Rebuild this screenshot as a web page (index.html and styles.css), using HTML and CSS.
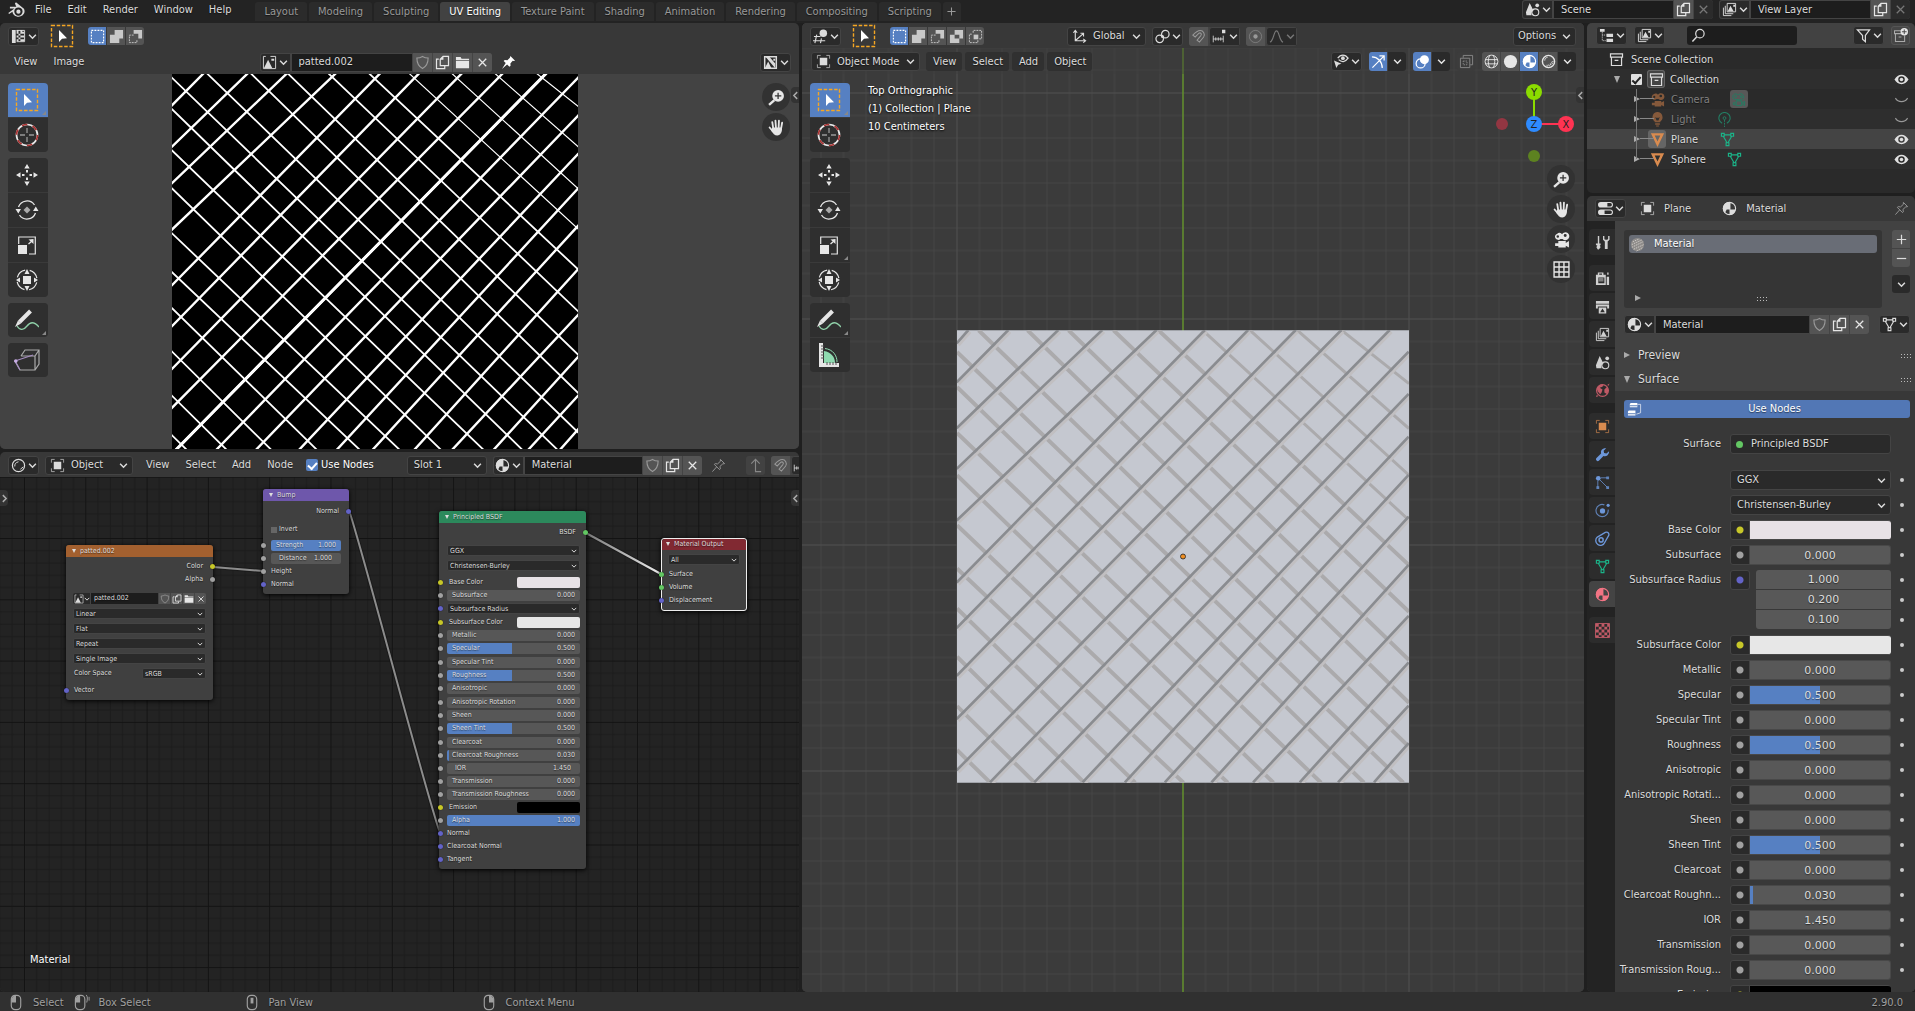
FILE: index.html
```html
<!DOCTYPE html>
<html lang="en">
<head>
<meta charset="utf-8">
<title>Blender</title>
<link rel="stylesheet" href="styles.css">
</head>
<body>
<svg class="defs" aria-hidden="true">
  <symbol id="i-blender" viewBox="0 0 16 16"><path fill="currentColor" fill-rule="evenodd" d="M7.500 1.200 15 7.400c2 4-1.500 7.500-5 7.500-3.200 0-5.600-2-5.800-4.700L1 12.300.3 11.200 6 7H1.800V5.500h6L6.500 2.300zM9.800 6a3.900 3.900 0 1 0 0 7.800 3.900 3.900 0 0 0 0-7.800zm0 2a2 2 0 1 1 0 4 2 2 0 0 1 0-4z"/></symbol>
  <symbol id="i-chev" viewBox="0 0 8 8"><path fill="none" stroke="currentColor" stroke-width="1.300" d="M1 2.500 4 5.500 7 2.500"/></symbol>
  <symbol id="i-uv" viewBox="0 0 16 16"><path fill="currentColor" d="M1 1h4v14H1zM6 1h2v2h2V1h2v2h2v2h-2v2h2v2h-2v2h2v2h-4v-2H8v2H6v-2h2V9H6V7h2V5H6zM8 3v2h2V3zM10 5v2h2V5zM8 7v2h2V7zM10 9v2h2V9z" fill-rule="evenodd"/><path fill="none" stroke="currentColor" d="M6 1.500h8.500v12H6"/></symbol>
  <symbol id="i-select" viewBox="0 0 24 24"><rect x="1.500" y="1.500" width="21" height="21" fill="none" stroke="#f5a623" stroke-width="1.400" stroke-dasharray="3.500 1.700"/><path fill="#fff" d="M9 6v12l3-3.200 5-.6z"/></symbol>
  <symbol id="i-set" viewBox="0 0 16 16"><rect x="1.500" y="1.500" width="13" height="13" fill="none" stroke="currentColor" stroke-width="1.200" stroke-dasharray="2 1.250"/></symbol>
  <symbol id="i-extend" viewBox="0 0 16 16"><path fill="currentColor" d="M6 1h9v9h-4v5H1V6h5z"/></symbol>
  <symbol id="i-subtract" viewBox="0 0 16 16"><path fill="currentColor" d="M6 1h9v9h-4V5H6z"/><path fill="none" stroke="currentColor" stroke-dasharray="2 1" d="M6 6.500H1.500v8h8V11"/></symbol>
  <symbol id="i-invert" viewBox="0 0 16 16"><path fill="currentColor" fill-rule="evenodd" d="M6 1h9v9h-4v5H1V6h5zM6 6v4h5V6z"/></symbol>
  <symbol id="i-intersect" viewBox="0 0 16 16"><rect x="6" y="6" width="5" height="5" fill="currentColor"/><path fill="none" stroke="currentColor" stroke-dasharray="2 1" d="M5.500 4V1.500h9v9H12M4 5.500H1.500v9h9V12"/></symbol>
  <symbol id="i-image" viewBox="0 0 16 16"><path fill="none" stroke="currentColor" d="M4 1.500H1.500v13h13v-13H9"/><path fill="currentColor" d="m2 14 4.500-9L11 14zM10 4h3v2h-3z"/></symbol>
  <symbol id="i-image2" viewBox="0 0 16 16"><path fill="none" stroke="currentColor" stroke-width="1.600" d="M1.800 1.800h12.400v12.400H1.800z"/><path fill="currentColor" d="m2 14 3.500-7L9 14zM2 1l11 13V9L7 2zM11 4h2v2h-2z"/></symbol>
  <symbol id="i-shield" viewBox="0 0 16 16"><path fill="none" stroke="currentColor" stroke-width="1.200" d="M8 1.500c2 1.200 4 1.700 6 1.700 0 5-1 8.500-6 11.300C3 11.700 2 8.200 2 3.200c2 0 4-.5 6-1.700z"/></symbol>
  <symbol id="i-copy" viewBox="0 0 16 16"><path fill="none" stroke="currentColor" stroke-width="1.300" d="M4 4.500H1.600v10h8.800V12M5.600 11.400V4.500l3-3h5.800v9.900z"/><path fill="currentColor" d="M5 5h4V1z"/></symbol>
  <symbol id="i-folder" viewBox="0 0 16 16"><path fill="currentColor" d="M1 2h5l1 2h8v1.500H1zM1 6.500h14V14H1z"/></symbol>
  <symbol id="i-x" viewBox="0 0 16 16"><path stroke="currentColor" stroke-width="1.400" d="m4 4 8 8m0-8-8 8"/></symbol>
  <symbol id="i-pin" viewBox="0 0 16 16"><path fill="currentColor" d="m10 1 5 5-1.500.500-1-.3L10 9l.2 2.500L9 12.600 6.500 10 1 15l4-6.500L2.800 6.500 4 5.400l2.800.2L9.500 3z"/></symbol>
  <symbol id="i-pin-off" viewBox="0 0 16 16"><path fill="none" stroke="currentColor" d="m10 1.500 4.500 4.500-2 .3L9.500 9l.5 2.500-1 .8-5.500-5.500 1-.8 2.500.3L10 3.500zM6 9.500 1.500 14.500"/></symbol>
  <symbol id="i-zoom" viewBox="0 0 16 16"><circle cx="9.500" cy="6.500" r="5.500" fill="currentColor"/><path stroke="currentColor" stroke-width="2.200" d="M6 10.500 1 15"/><path stroke="#333" stroke-width="1.200" d="M9.500 3.500v6m-3-3h6"/></symbol>
  <symbol id="i-hand" viewBox="0 0 16 16"><path fill="none" stroke="currentColor" stroke-width="1.700" stroke-linecap="round" d="M5 9 4 3M7.500 8.500 7 1.500M10 8.500l.3-7M12.300 9l1-5.500M4.500 11.500 1.500 8"/><path fill="currentColor" d="M4 8h9.200c.2 4-1.200 7.500-4.500 7.500-2.500 0-4-2-5.700-4.500z"/></symbol>
  <symbol id="i-cursor3d" viewBox="0 0 24 24"><circle cx="12" cy="12" r="10.500" fill="none" stroke="#e8e8e8" stroke-width="1.700"/><circle cx="12" cy="12" r="10.500" fill="none" stroke="#a33" stroke-width="1.700" stroke-dasharray="5.500 5.500"/><path stroke="#999" stroke-width="1.300" d="M12 5v5m0 4v5M5 12h5m4 0h5"/></symbol>
  <symbol id="i-move" viewBox="0 0 24 24"><path fill="currentColor" d="m12 1 2.700 4.500H9.300zM12 23l2.700-4.500H9.300zM1 12l4.500-2.700v5.400zM23 12l-4.500-2.700v5.400zM11 7h2v2.500h-2zM11 14.500h2V17h-2zM7 11h2.500v2H7zM14.500 11H17v2h-2.500z"/></symbol>
  <symbol id="i-rotate" viewBox="0 0 24 24"><path fill="none" stroke="currentColor" stroke-width="1.300" d="M3.500 9a9 9 0 0 1 16-2M20.500 15A9 9 0 0 1 4.500 17"/><path fill="currentColor" d="m.5 11h5.500l-2.700 4.500zM18 13h5.500l-2.700-4.500z"/><path fill="#aaa" d="m12 8.500 3.500 3.500-3.500 3.500L8.500 12z"/></symbol>
  <symbol id="i-scale" viewBox="0 0 24 24"><path fill="none" stroke="currentColor" stroke-width="1.200" d="M3.700 11V4h16.600v17H14"/><path fill="currentColor" d="M3 12h9v9H3zM18.500 6v5l-5-4.500z"/><path stroke="currentColor" stroke-width="1.300" d="m13.500 11 3.500-3"/></symbol>
  <symbol id="i-transform" viewBox="0 0 24 24"><circle cx="12" cy="12" r="10" fill="none" stroke="currentColor" stroke-width="1.200" stroke-dasharray="11 4.700" stroke-dashoffset="-2.500"/><path fill="currentColor" d="M8 8h8v8H8zM12 1l2.500 5h-5zM12 23l2.500-5h-5zM1 12l4-2.500v5zM23 12l-4-2.500v5z"/></symbol>
  <symbol id="i-annotate" viewBox="0 0 24 24"><path fill="none" stroke="#8fd0a8" stroke-width="1.300" d="M2 18c3 5 7 4 10 0s7-5 12 1"/><path stroke="currentColor" stroke-width="4" d="m15.500 3-11 11"/><path fill="currentColor" d="m0 19 3-6.500 3 3z"/></symbol>
  <symbol id="i-cube" viewBox="0 0 26 24"><path fill="none" stroke="#aaa" stroke-width="1.200" d="M7 8h14v14H6L1 13M7 8l4-6h14v14l-4 6M21 8l4-6"/><path fill="none" stroke="#a58cc0" stroke-width="1.200" d="m6 22-5-9 18-6"/><circle cx="1.800" cy="13" r="1.800" fill="#c9aee5"/></symbol>
  <symbol id="i-measure" viewBox="0 0 24 24"><path fill="#8fdab0" d="M7 8c7 1 11 6 11 12H7z"/><path fill="none" stroke="#8fdab0" d="M8 5.500c8 1 12 7 12 13.500"/><path fill="currentColor" d="M2 0h4v20h16v4H2z"/><path stroke="#555" d="M4 3h3M4 6h3M4 9h3M4 12h3M4 15h3M10 22v-3M13 22v-3M16 22v-3M19 22v-3"/></symbol>
  <symbol id="i-view3d" viewBox="0 0 16 16"><path fill="none" stroke="currentColor" stroke-width="1.200" d="M4 6 2 15M9 10l-1 5M1 8h7M0 12.500h13"/><circle cx="11" cy="4.500" r="4" fill="currentColor"/></symbol>
  <symbol id="i-object" viewBox="0 0 16 16"><path fill="none" stroke="currentColor" opacity=".7" d="M1.500 5V1.500H5M11 1.500h3.500V5M14.500 11v3.500H11M5 14.500H1.500V11"/><path fill="currentColor" d="M4 4h8v8H4z"/></symbol>
  <symbol id="i-axes" viewBox="0 0 16 16"><path fill="none" stroke="currentColor" stroke-width="1.200" d="M3.500 2v10.500H14M4 12l8-7M1.500 4l2-2.500 2 2.500M12 10.500l2.500 2-2.500 2M9 4.500h3.300V8"/></symbol>
  <symbol id="i-link" viewBox="0 0 16 16"><circle cx="5" cy="10.500" r="4" fill="none" stroke="currentColor" stroke-width="1.300"/><circle cx="11" cy="5.500" r="4" fill="none" stroke="currentColor" stroke-width="1.300"/><circle cx="8" cy="8" r="1.600" fill="currentColor"/></symbol>
  <symbol id="i-magnet" viewBox="0 0 16 16"><path fill="none" stroke="currentColor" stroke-width="1.100" d="M2 6.500C5 3 7 1.500 10 1.500s5.500 4 3.500 7L9 14l-2.500-2 4-5c1.500-2-.5-3.500-2-2.500L4.500 8.500z"/></symbol>
  <symbol id="i-snap" viewBox="0 0 18 16"><path fill="none" stroke="currentColor" d="M1.500 7v8M4.500 9v4M7.500 9v4M10.500 9v4M13.500 7v8M1.500 11h12"/><path fill="currentColor" d="M12 0h4v4h-4z"/></symbol>
  <symbol id="i-prop" viewBox="0 0 16 16"><circle cx="8" cy="8" r="6.500" fill="none" stroke="currentColor" opacity=".6"/><circle cx="8" cy="8" r="2.300" fill="currentColor"/></symbol>
  <symbol id="i-curve" viewBox="0 0 16 16"><path fill="none" stroke="currentColor" stroke-width="1.200" d="M1 14c4-1 4-12 7-12s3 11 7 12"/></symbol>
  <symbol id="i-eyecur" viewBox="0 0 16 16"><path fill="none" stroke="currentColor" stroke-width="1.400" d="M4 4.500C7 0 12 0 15 4.500 12 9 8 9 5 6"/><circle cx="9.500" cy="4.500" r="2" fill="currentColor"/><path fill="currentColor" d="m0 7 8 3.500-3.500 1L2.500 15z"/></symbol>
  <symbol id="i-gizmo" viewBox="0 0 16 16"><path fill="none" stroke="currentColor" stroke-width="1.300" d="M1 3c6 0 11 5 11 12M1.500 14.500 13.500 2.500M9 2h5v5"/></symbol>
  <symbol id="i-overlay" viewBox="0 0 16 16"><circle cx="6" cy="10" r="4.800" fill="none" stroke="currentColor" stroke-width="1.300"/><circle cx="10" cy="6" r="4.800" fill="currentColor"/></symbol>
  <symbol id="i-xray" viewBox="0 0 16 16"><path fill="none" stroke="currentColor" d="M1.500 4.500h10v10h-10zM4.500 4V1.500h10v10H12"/><path fill="none" stroke="currentColor" stroke-dasharray="1.500 1" d="M4.500 7.500h4v4h-4z"/></symbol>
  <symbol id="i-wire" viewBox="0 0 16 16"><circle cx="8" cy="8" r="6.800" fill="none" stroke="currentColor"/><path fill="none" stroke="currentColor" d="M1.500 6h13M1.500 10.500h13M6 1.500c-2 4-2 9 0 13M10 1.500c2 4 2 9 0 13"/></symbol>
  <symbol id="i-solid" viewBox="0 0 16 16"><circle cx="8" cy="8" r="7" fill="currentColor"/></symbol>
  <symbol id="i-mat" viewBox="0 0 16 16"><circle cx="8" cy="8" r="6.500" fill="none" stroke="currentColor" stroke-width="1.200"/><path fill="currentColor" d="M8 1a7 7 0 0 0-5 12l2-4h4V1zM8 9h6.500A7 7 0 0 1 8 15z"/></symbol>
  <symbol id="i-rendered" viewBox="0 0 16 16"><circle cx="8" cy="8" r="6.500" fill="none" stroke="currentColor" stroke-width="1.500"/><path fill="none" stroke="currentColor" d="M4 7c0-2 1-3 3-3.500"/><path stroke="currentColor" stroke-dasharray="1 1" stroke-width="2" d="M6 12.500c3 0 6-2 6.500-5" fill="none"/></symbol>
  <symbol id="i-shading" viewBox="0 0 16 16"><circle cx="8" cy="8" r="6.500" fill="none" stroke="currentColor" stroke-width="1.300"/><path fill="none" stroke="currentColor" d="M4 9c0-3 1-4 4-5M10 12l3-2.500"/></symbol>
  <symbol id="i-scene" viewBox="0 0 16 16"><path fill="currentColor" d="M5 1 9 9a4.500 4.500 0 0 0-2 5H1.500L1 11z"/><circle cx="11" cy="11" r="3.700" fill="none" stroke="currentColor" stroke-width="1.200"/><circle cx="13" cy="3.500" r="2" fill="currentColor"/></symbol>
  <symbol id="i-layers" viewBox="0 0 16 16"><path fill="none" stroke="currentColor" d="M5.500 1.500h9v9h-9zM3.500 4v8.500H12M1.500 6v8.500H10"/><path fill="currentColor" d="m6 10 3-6 3.500 6zM12 3h2v2h-2z"/></symbol>
  <symbol id="i-outliner" viewBox="0 0 16 16"><path fill="currentColor" d="M1 1h5v3H1zM8 6h7v3.500H8zM8 11.500h7V15H8z"/><path fill="none" stroke="currentColor" stroke-dasharray="1 1" d="M3.500 4v9.500H8M3.500 7.500H8"/></symbol>
  <symbol id="i-search" viewBox="0 0 16 16"><circle cx="9.500" cy="6" r="4.500" fill="none" stroke="currentColor" stroke-width="1.300"/><path stroke="currentColor" stroke-width="1.600" d="M6 9.500 1.500 14.500"/></symbol>
  <symbol id="i-filter" viewBox="0 0 16 16"><path fill="none" stroke="currentColor" stroke-width="1.300" d="M1.500 2h13L10 8v6.500L7 12V8z"/></symbol>
  <symbol id="i-box" viewBox="0 0 16 16"><path fill="none" stroke="currentColor" stroke-width="1.300" d="M1.600 2h12.800v3.500H1.600zM2.600 5.500h10.800v8.900H2.600zM6 9h4"/></symbol>
  <symbol id="i-newbox" viewBox="0 0 16 16"><path fill="none" stroke="#aaa" stroke-width="1.100" d="M9 3H1.600v3H13M2.600 6v8.400h9.800V8M6 9.500h3"/><circle cx="12" cy="4" r="4" fill="currentColor"/><path stroke="#444" d="M12 1.500v5M9.500 4h5"/></symbol>
  <symbol id="i-camera" viewBox="0 0 16 16"><path fill="currentColor" fill-rule="evenodd" d="M4 2.500a3 3 0 1 0 3 5h2A3.700 3.700 0 1 0 8.500 3 3 3 0 0 0 4 2.500zM4.500 4a1.200 1.200 0 1 1 0 2.400 1.200 1.200 0 0 1 0-2.400zm7-1.200a1.400 1.400 0 1 1 0 2.800 1.400 1.400 0 0 1 0-2.800zM5 9.500h7v1.700L15 9.500v6l-3-1.700v1.700H5V14H2v-2.500h3z"/></symbol>
  <symbol id="i-cameradata" viewBox="0 0 16 16"><g fill="none" stroke="currentColor"><path d="M4.500 8a3 3 0 1 1 3-4.500 3.300 3.300 0 1 1 3 5z"/><circle cx="5" cy="5" r=".8"/><circle cx="11" cy="5" r="1"/><path d="M5.500 9.500h6v5h-6zM11.500 12l3-2v4.500zM5 11.500H2.500v2H5"/></g></symbol>
  <symbol id="i-light" viewBox="0 0 16 16"><path fill="currentColor" fill-rule="evenodd" d="M8 0a5.500 5.500 0 0 1 3 10v1H5v-1A5.500 5.500 0 0 1 8 0zM5.500 5 7 9h2l1.500-4-1 1h-3zM5.500 12h5v1.500h-5zM6.500 14.500h3v1h-3z"/></symbol>
  <symbol id="i-lightdata" viewBox="0 0 16 16"><path fill="none" stroke="currentColor" stroke-width="1.200" d="M5.500 12a6 6 0 1 1 5 0"/><circle cx="8" cy="6.500" r="1.500" fill="none" stroke="currentColor"/><path stroke="currentColor" stroke-dasharray="2 1" d="M8 8.500V16"/></symbol>
  <symbol id="i-mesh" viewBox="0 0 16 16"><path fill="none" stroke="currentColor" stroke-width="2.600" d="M3 2.500h10L8 13z"/></symbol>
  <symbol id="i-meshdata" viewBox="0 0 16 16"><g fill="none" stroke="currentColor" stroke-width="1.200"><path d="M1.500 1.500h3v3h-3zM11.500 1.500h3v3h-3zM6.500 11.500h3v3h-3zM4.500 3h7M3.500 4.500l4 7M12.500 4.500l-4 7"/></g></symbol>
  <symbol id="i-eye" viewBox="0 0 16 16"><path fill="currentColor" fill-rule="evenodd" d="M8 3c3 0 5.500 2 7.500 5-2 3-4.500 5-7.500 5S2.500 11 .5 8C2.500 5 5 3 8 3zm0 1.500a3.500 3.500 0 1 0 0 7 3.500 3.500 0 0 0 0-7z"/><circle cx="8" cy="8" r="1.900" fill="currentColor"/></symbol>
  <symbol id="i-eyeoff" viewBox="0 0 16 16"><path fill="none" stroke="currentColor" stroke-width="1.200" d="M1.500 6.500c3 5 10 5 13 0"/></symbol>
  <symbol id="i-props" viewBox="0 0 16 16"><path fill="currentColor" fill-rule="evenodd" d="M3 1h10a3 3 0 0 1 0 6H3a3 3 0 0 1 0-6zm7 1.200v3.600h3a1.800 1.800 0 0 0 0-3.600zM3 9h10a3 3 0 0 1 0 6H3a3 3 0 0 1 0-6zm4 1.200v3.600h6a1.800 1.800 0 0 0 0-3.600z"/></symbol>
  <symbol id="i-tool" viewBox="0 0 16 16"><path fill="currentColor" d="M3 1h1.500v8H3zM1 9h5v2H5l1 2-2 2.500H3L1.500 13l1-2H1zM8.500 1v4l2 2v8h3V7l2-2V1h-1.500v3.500L12.500 5h-1L10 4.500V1z"/></symbol>
  <symbol id="i-render" viewBox="0 0 16 16"><path fill="currentColor" fill-rule="evenodd" d="M1 4h2V1.500h6V4h2.500v11H1zM3.500 7v6H10V7zM4.500 2.700V4h3V2.700zM12.500 6H15v9h-2.500zM4 8h5v1H4zM4 10h5v1H4zM13 1.500h1.500V4H13z"/></symbol>
  <symbol id="i-output" viewBox="0 0 16 16"><path fill="currentColor" fill-rule="evenodd" d="M1 2h14v3H1zM1 5.800h14V10h-2V8H3v2H1zM4 9h8v6.500H4zM5.500 14h5L8 10z"/></symbol>
  <symbol id="i-world" viewBox="0 0 16 16"><circle cx="8" cy="8" r="6.300" fill="none" stroke="currentColor" stroke-width="1.300"/><path fill="currentColor" d="M2 6c1-3 4-5 7-4.500L8 4 5 5l3 2-1 3-1.500 2L3 9zM10 7l3-3 1.500 4-1.500 4-3-2zM1 15l2.500-1-1.500-1.500zM15.500.5 13 2l1.500 1z"/></symbol>
  <symbol id="i-wrench" viewBox="0 0 16 16"><path fill="currentColor" d="M10 1.200A4.500 4.500 0 0 0 6.500 7L1.300 12a2 2 0 0 0 2.800 2.700L9 9.500a4.500 4.500 0 0 0 6-5l-2.800 2.300-2.500-.5-.5-2.300L12 1.300z"/></symbol>
  <symbol id="i-particles" viewBox="0 0 16 16"><circle cx="3.500" cy="3.500" r="2.500" fill="currentColor"/><path fill="none" stroke="currentColor" opacity=".8" d="M6 3h7M3 6v7M5 5l8 8"/><path fill="currentColor" d="M12 1.500h3v3h-3zM1.500 12h3v3h-3zM12 12h3v3h-3z" opacity=".8"/></symbol>
  <symbol id="i-physics" viewBox="0 0 16 16"><path fill="none" stroke="currentColor" stroke-width="1.200" opacity=".8" d="M10 2a6.500 6.500 0 1 0 4 5"/><circle cx="8" cy="8.500" r="2.800" fill="currentColor"/><circle cx="14" cy="2.500" r="1.700" fill="currentColor"/></symbol>
  <symbol id="i-constraint" viewBox="0 0 16 16"><path fill="none" stroke="currentColor" stroke-width="1.400" d="M2.500 6.500 11 1.500c3-1 4.500 1.500 3.500 3.500L10.500 12a5 5 0 1 1-8-5.500z"/><circle cx="6.500" cy="9.500" r="2.200" fill="none" stroke="currentColor" stroke-width="1.600"/></symbol>
  <symbol id="i-texture" viewBox="0 0 16 16"><path fill="none" stroke="currentColor" d="M.5.500h15v15H.5z"/><path fill="currentColor" d="M1 1h3v3H1zM7 1h3v3H7zM13 1h2v3h-2zM4 4h3v3H4zM10 4h3v3h-3zM1 7h3v3H1zM7 7h3v3H7zM13 7h2v3h-2zM4 10h3v3H4zM10 10h3v3h-3zM1 13h3v2H1zM7 13h3v2H7zM13 13h2v2h-2z"/></symbol>
  <symbol id="i-lattice" viewBox="0 0 16 16"><path fill="none" stroke="currentColor" stroke-width="1.300" d="M1 1h14v14H1zM5.700 1v14M10.300 1v14M1 5.700h14M1 10.300h14"/></symbol>
  <symbol id="i-nodes" viewBox="0 0 16 16"><path fill="currentColor" d="M4 1h7v4.500H3V2zM2 9h7v5.500H1V10z"/><path stroke="#5277b5" d="M3 4h8M1 12.500h8"/><path fill="none" stroke="currentColor" opacity=".7" d="M11 2.500h3.500v9L10 13"/></symbol>
  <symbol id="i-up" viewBox="0 0 16 16"><path fill="none" stroke="currentColor" stroke-width="1.200" d="M14 14.500H8V2M3.500 6 8 1.500 12.500 6"/></symbol>
  <symbol id="i-plus" viewBox="0 0 16 16"><path stroke="currentColor" stroke-width="1.300" d="M8 3v10M3 8h10"/></symbol>
  <symbol id="i-minus" viewBox="0 0 16 16"><path stroke="currentColor" stroke-width="1.300" d="M3 8h10"/></symbol>
  <symbol id="i-ball" viewBox="0 0 16 16"><circle cx="8" cy="8" r="7" fill="#8f8c8a"/><path fill="none" stroke="#d0cdca" stroke-dasharray="1.500 1" d="m3 5 7-3M2 8l11-5M2 11l12-6M4 13l11-5M7 15l7-4"/></symbol>
  <symbol id="i-mouse-l" viewBox="0 0 16 18"><rect x="3" y="1.500" width="10" height="15" rx="4" fill="none" stroke="currentColor" stroke-width="1.200"/><path fill="currentColor" d="M3 9V5l3.500-4H8v8z"/></symbol>
  <symbol id="i-mouse-drag" viewBox="0 0 20 18"><rect x="3" y="1.500" width="10" height="15" rx="4" fill="none" stroke="currentColor" stroke-width="1.200"/><path fill="currentColor" d="M3 9V5l3.500-4H8v8z"/><path fill="none" stroke="currentColor" d="M14.500 1c1.500 2 1.500 4 .5 8M17.500 3v4"/></symbol>
  <symbol id="i-mouse-m" viewBox="0 0 16 18"><rect x="3" y="1.500" width="10" height="15" rx="4" fill="none" stroke="currentColor" stroke-width="1.200"/><path fill="currentColor" d="M6.500 4h3v6h-3z"/></symbol>
  <symbol id="i-mouse-r" viewBox="0 0 16 18"><rect x="3" y="1.500" width="10" height="15" rx="4" fill="none" stroke="currentColor" stroke-width="1.200"/><path fill="currentColor" d="M13 9V5L9.500 1H8v8z"/></symbol>
  <path id="rise" d="M50 70 85 30M50 187 205 30M50 325 355 30M50 447 487 30M50 602 650 30M50 788 795 30M50 925 925 30M50 1068 1068 30M50 1198 1205 30M50 1352 1350 30M150 1388 1407 95M283 1388 1407 222M428 1388 1407 350M555 1388 1407 465M675 1388 1407 590M815 1388 1407 735M940 1388 1407 888M1080 1388 1407 1028M1195 1388 1407 1158M1303 1388 1407 1270"/>
  <path id="fall" d="M50 1290 150 1388M50 1158 283 1388M50 1010 432 1388M50 865 585 1388M50 745 730 1388M50 615 863 1388M50 465 1000 1388M50 338 1143 1388M50 200 1272 1388M50 95 1390 1388M115 30 1407 1280M262 30 1407 1148M385 30 1407 1020M520 30 1407 875M655 30 1407 735"/>
  <path id="fall-thin" d="M788 30 1407 600M930 30 1407 465M1072 30 1407 325M1205 30 1407 190"/>
</svg>

<header class="topbar">
  <nav class="menus" aria-label="Main">
    <svg class="ic logo"><use href="#i-blender"/></svg>
    <button>File</button><button>Edit</button><button>Render</button><button>Window</button><button>Help</button>
  </nav>
  <nav class="tabs" aria-label="Workspaces">
    <button>Layout</button><button>Modeling</button><button>Sculpting</button><button class="on">UV Editing</button><button>Texture Paint</button><button>Shading</button><button>Animation</button><button>Rendering</button><button>Compositing</button><button>Scripting</button><button class="add" aria-label="Add workspace"><svg class="ic"><use href="#i-plus"/></svg></button>
  </nav>
  <div class="topright">
    <div class="picker"><button class="drop" aria-label="Browse scene"><svg class="ic"><use href="#i-scene"/></svg><svg class="ch"><use href="#i-chev"/></svg></button><input type="text" value="Scene" aria-label="Scene"><button class="sq" aria-label="New scene"><svg class="ic"><use href="#i-copy"/></svg></button><button class="sq off" aria-label="Delete scene"><svg class="ic"><use href="#i-x"/></svg></button></div>
    <div class="picker"><button class="drop" aria-label="Browse view layer"><svg class="ic"><use href="#i-layers"/></svg><svg class="ch"><use href="#i-chev"/></svg></button><input type="text" value="View Layer" aria-label="View layer"><button class="sq" aria-label="New view layer"><svg class="ic"><use href="#i-copy"/></svg></button><button class="sq off" aria-label="Delete view layer"><svg class="ic"><use href="#i-x"/></svg></button></div>
  </div>
</header>

<main class="workspace">
  <div class="column col-editors">
    <section class="editor uv" aria-label="UV Editor">
      <div class="bar">
        <button class="drop" aria-label="Editor type"><svg class="ic"><use href="#i-uv"/></svg><svg class="ch"><use href="#i-chev"/></svg></button>
        <svg class="ic active-tool"><use href="#i-select"/></svg>
        <div class="modes"><button class="on" aria-label="Set"><svg class="ic"><use href="#i-set"/></svg></button><button aria-label="Extend"><svg class="ic"><use href="#i-extend"/></svg></button><button aria-label="Subtract"><svg class="ic"><use href="#i-subtract"/></svg></button></div>
      </div>
      <div class="bar thirds">
        <nav class="menus plain"><button>View</button><button>Image</button></nav>
        <div class="center-pick">
          <div class="picker"><button class="drop" aria-label="Browse image"><svg class="ic"><use href="#i-image"/></svg><svg class="ch"><use href="#i-chev"/></svg></button><input type="text" value="patted.002" aria-label="Image name"><button class="sq dim" aria-label="Fake user"><svg class="ic"><use href="#i-shield"/></svg></button><button class="sq" aria-label="New image"><svg class="ic"><use href="#i-copy"/></svg></button><button class="sq" aria-label="Open image"><svg class="ic"><use href="#i-folder"/></svg></button><button class="sq" aria-label="Unlink image"><svg class="ic"><use href="#i-x"/></svg></button></div>
          <svg class="ic bright"><use href="#i-pin"/></svg>
        </div>
        <div class="end"><button class="drop" aria-label="Display channels"><svg class="ic"><use href="#i-image2"/></svg><svg class="ch"><use href="#i-chev"/></svg></button></div>
      </div>
      <div class="uv-body">
        <div class="tools">
          <div class="tool-group"><button class="on more" aria-label="Select box"><svg class="ic"><use href="#i-select"/></svg></button><button aria-label="Cursor"><svg class="ic"><use href="#i-cursor3d"/></svg></button></div>
          <div class="tool-group"><button aria-label="Move"><svg class="ic"><use href="#i-move"/></svg></button><button aria-label="Rotate"><svg class="ic"><use href="#i-rotate"/></svg></button><button aria-label="Scale"><svg class="ic"><use href="#i-scale"/></svg></button><button aria-label="Transform"><svg class="ic"><use href="#i-transform"/></svg></button></div>
          <div class="tool-group"><button class="more" aria-label="Annotate"><svg class="ic"><use href="#i-annotate"/></svg></button></div>
          <div class="tool-group"><button aria-label="Rip region"><svg class="ic wide"><use href="#i-cube"/></svg></button></div>
        </div>
        <svg class="uv-image" viewBox="50 30 1357 1358" preserveAspectRatio="xMidYMid slice" role="img" aria-label="patted.002">
          <path fill="#000" d="M50 30h1357v1358H50z"/>
          <g fill="none" stroke="#fff" stroke-linecap="square"><use href="#rise" stroke-width="8"/><use href="#fall" stroke-width="6"/><use href="#fall-thin" stroke-width="4"/><path stroke-width="10" d="M50 1352 1350 30"/></g>
        </svg>
        <div class="nav"><button aria-label="Zoom"><svg class="ic"><use href="#i-zoom"/></svg></button><button aria-label="Pan"><svg class="ic"><use href="#i-hand"/></svg></button></div>
        <button class="fold fold-r" aria-label="Show sidebar"><svg class="ch"><use href="#i-chev"/></svg></button>
      </div>
    </section>

    <section class="editor shader" aria-label="Shader Editor">
      <div class="bar node-bar">
        <button class="drop" aria-label="Editor type"><svg class="ic"><use href="#i-shading"/></svg><svg class="ch"><use href="#i-chev"/></svg></button>
        <div class="select type"><svg class="ic"><use href="#i-object"/></svg><select aria-label="Shader type"><option>Object</option></select><svg class="ch"><use href="#i-chev"/></svg></div>
        <nav class="menus plain"><button>View</button><button>Select</button><button>Add</button><button>Node</button></nav>
        <label class="check"><input type="checkbox" checked>Use Nodes</label>
        <div class="select slot"><select aria-label="Slot"><option>Slot 1</option></select><svg class="ch"><use href="#i-chev"/></svg></div>
        <div class="picker"><button class="drop" aria-label="Browse material"><svg class="ic"><use href="#i-mat"/></svg><svg class="ch"><use href="#i-chev"/></svg></button><input type="text" value="Material" aria-label="Material name"><button class="sq dim" aria-label="Fake user"><svg class="ic"><use href="#i-shield"/></svg></button><button class="sq" aria-label="New material"><svg class="ic"><use href="#i-copy"/></svg></button><button class="sq" aria-label="Unlink material"><svg class="ic"><use href="#i-x"/></svg></button></div>
        <svg class="ic grey pin"><use href="#i-pin-off"/></svg>
        <button class="sq flat" aria-label="Parent node tree"><svg class="ic"><use href="#i-up"/></svg></button>
        <div class="picker snap"><button class="sq dim" aria-label="Snap"><svg class="ic"><use href="#i-magnet"/></svg></button><button class="drop" aria-label="Snap element"><svg class="ic"><use href="#i-snap"/></svg><svg class="ch"><use href="#i-chev"/></svg></button></div>
      </div>
      <div class="node-canvas">
        <svg class="node-links" aria-hidden="true">
          <defs>
            <pattern id="node-grid" width="61.300" height="61.300" patternUnits="userSpaceOnUse" x="24" y="61"><path fill="none" stroke="#1b1b1b" stroke-width="1" d="M12.700 0v62M25 0v62M37.300 0v62M49.500 0v62M0 12.700h62M0 25h62M0 37.300h62M0 49.500h62"/><path fill="none" stroke="#131313" stroke-width="1" d="M.5 0v62M0 .5h62"/></pattern>
            <linearGradient id="lit"><stop offset="0" stop-color="#777"/><stop offset="1" stop-color="#eee"/></linearGradient>
          </defs>
          <rect width="100%" height="100%" fill="url(#node-grid)"/>
          <g fill="none" stroke="#111" stroke-width="4" opacity=".5"><path d="m213 90 50 4M349 34c6 10 84 310 91 321M586 56l75 41"/></g>
          <g fill="none" stroke="#8c8c8c" stroke-width="2"><path d="m213 90 50 4M349 34c6 10 84 310 91 321"/><path stroke="url(#lit)" d="m586 56 75 41"/></g>
        </svg>
        <button class="fold fold-l" aria-label="Show toolbar"><svg class="ch"><use href="#i-chev"/></svg></button>
        <button class="fold fold-r" aria-label="Show sidebar"><svg class="ch"><use href="#i-chev"/></svg></button>

        <article class="node n-image">
          <h3>patted.002</h3>
          <div class="nrow out">Color<i class="sock yellow"></i></div>
          <div class="nrow out">Alpha<i class="sock"></i></div>
          <div class="mini-picker"><button aria-label="Browse image"><svg class="ic"><use href="#i-image"/></svg><svg class="ch"><use href="#i-chev"/></svg></button><input type="text" value="patted.002" aria-label="Image"><button class="sq dim" aria-label="Fake user"><svg class="ic"><use href="#i-shield"/></svg></button><button class="sq" aria-label="New"><svg class="ic"><use href="#i-copy"/></svg></button><button class="sq" aria-label="Open"><svg class="ic"><use href="#i-folder"/></svg></button><button class="sq" aria-label="Unlink"><svg class="ic"><use href="#i-x"/></svg></button></div>
          <div class="select"><select aria-label="Interpolation"><option>Linear</option></select><svg class="ch"><use href="#i-chev"/></svg></div>
          <div class="select"><select aria-label="Projection"><option>Flat</option></select><svg class="ch"><use href="#i-chev"/></svg></div>
          <div class="select"><select aria-label="Extension"><option>Repeat</option></select><svg class="ch"><use href="#i-chev"/></svg></div>
          <div class="select"><select aria-label="Source"><option>Single Image</option></select><svg class="ch"><use href="#i-chev"/></svg></div>
          <div class="split"><label for="cs">Color Space</label><div class="select"><select id="cs"><option>sRGB</option></select><svg class="ch"><use href="#i-chev"/></svg></div></div>
          <div class="nrow last">Vector<i class="sock blue"></i></div>
        </article>

        <article class="node n-bump">
          <h3>Bump</h3>
          <div class="nrow out">Normal<i class="sock blue"></i></div>
          <label class="nrow tick"><input type="checkbox">Invert</label>
          <label class="nrow"><span class="val full">Strength<input type="text" value="1.000"></span><i class="sock"></i></label>
          <label class="nrow"><span class="val inset">Distance<input type="text" value="1.000"></span><i class="sock"></i></label>
          <div class="nrow">Height<i class="sock"></i></div>
          <div class="nrow">Normal<i class="sock blue"></i></div>
        </article>

        <article class="node n-bsdf">
          <h3>Principled BSDF</h3>
          <div class="nrow out">BSDF<i class="sock green"></i></div>
          <div class="select"><select aria-label="Distribution"><option>GGX</option></select><svg class="ch"><use href="#i-chev"/></svg></div>
          <div class="select"><select aria-label="Subsurface method"><option>Christensen-Burley</option></select><svg class="ch"><use href="#i-chev"/></svg></div>
          <div class="sockets">
            <div>
              <div class="nrow">Base Color<button class="swatch pinkish" aria-label="Base Color"></button><i class="sock yellow"></i></div>
              <label class="nrow"><span class="val">Subsurface<input type="text" value="0.000"></span><i class="sock"></i></label>
              <div class="nrow"><div class="select"><select aria-label="Subsurface Radius"><option>Subsurface Radius</option></select><svg class="ch"><use href="#i-chev"/></svg></div><i class="sock blue"></i></div>
            </div>
            <div>
              <div class="nrow">Subsurface Color<button class="swatch" aria-label="Subsurface Color"></button><i class="sock yellow"></i></div>
              <label class="nrow"><span class="val">Metallic<input type="text" value="0.000"></span><i class="sock"></i></label>
              <label class="nrow"><span class="val half">Specular<input type="text" value="0.500"></span><i class="sock"></i></label>
            </div>
            <div>
              <label class="nrow"><span class="val">Specular Tint<input type="text" value="0.000"></span><i class="sock"></i></label>
              <label class="nrow"><span class="val half">Roughness<input type="text" value="0.500"></span><i class="sock"></i></label>
              <label class="nrow"><span class="val">Anisotropic<input type="text" value="0.000"></span><i class="sock"></i></label>
            </div>
            <div>
              <label class="nrow"><span class="val">Anisotropic Rotation<input type="text" value="0.000"></span><i class="sock"></i></label>
              <label class="nrow"><span class="val">Sheen<input type="text" value="0.000"></span><i class="sock"></i></label>
              <label class="nrow"><span class="val half">Sheen Tint<input type="text" value="0.500"></span><i class="sock"></i></label>
            </div>
            <div>
              <label class="nrow"><span class="val">Clearcoat<input type="text" value="0.000"></span><i class="sock"></i></label>
              <label class="nrow"><span class="val slight">Clearcoat Roughness<input type="text" value="0.030"></span><i class="sock"></i></label>
              <label class="nrow"><span class="val inset">IOR<input type="text" value="1.450"></span><i class="sock"></i></label>
              <label class="nrow"><span class="val">Transmission<input type="text" value="0.000"></span><i class="sock"></i></label>
              <label class="nrow"><span class="val">Transmission Roughness<input type="text" value="0.000"></span><i class="sock"></i></label>
              <div class="nrow">Emission<button class="swatch black" aria-label="Emission"></button><i class="sock yellow"></i></div>
              <label class="nrow"><span class="val full">Alpha<input type="text" value="1.000"></span><i class="sock"></i></label>
              <div class="nrow">Normal<i class="sock blue"></i></div>
              <div class="nrow">Clearcoat Normal<i class="sock blue"></i></div>
              <div class="nrow">Tangent<i class="sock blue"></i></div>
            </div>
          </div>
        </article>

        <article class="node n-output">
          <h3>Material Output</h3>
          <div class="select"><select aria-label="Target"><option>All</option></select><svg class="ch"><use href="#i-chev"/></svg></div>
          <div class="nrow">Surface<i class="sock green"></i></div>
          <div class="nrow">Volume<i class="sock green"></i></div>
          <div class="nrow">Displacement<i class="sock blue"></i></div>
        </article>
        <p class="tree-name">Material</p>
      </div>
    </section>
  </div>

  <section class="editor view3d" aria-label="3D Viewport">
    <svg class="scene" viewBox="0 0 782 969" preserveAspectRatio="xMidYMid slice" aria-hidden="true">
      <defs>
        <pattern id="floor" width="226" height="226" patternUnits="userSpaceOnUse" x="154.500" y="69.500"><path fill="none" stroke="#464646" d="M23 0v226M45.500 0v226M68 0v226M90.500 0v226M113 0v226M135.500 0v226M158 0v226M181 0v226M203.500 0v226M0 23h226M0 45.500h226M0 68h226M0 90.500h226M0 113h226M0 135.500h226M0 158h226M0 181h226M0 203.500h226"/><path fill="none" stroke="#505050" d="M.5 0v226M0 .5h226"/></pattern>
      </defs>
      <rect width="782" height="969" fill="#3b3b3b"/><rect width="782" height="969" fill="url(#floor)"/>
      <path stroke="#618e2a" stroke-width="1.500" d="M381 0v969"/>
      <svg x="155" y="307" width="452" height="453" viewBox="50 30 1357 1358">
        <path fill="#c5c8d0" d="M50 30h1357v1358H50z"/>
        <g fill="none"><use href="#fall" stroke="#abaaac" stroke-width="12"/><use href="#fall-thin" stroke="#abaaac" stroke-width="9"/><use href="#rise" x="5" y="5" stroke="#c1bfc1" stroke-width="8"/><use href="#rise" x="-1" y="-1" stroke="#8a8c90" stroke-width="8"/></g>
      </svg>
      <circle cx="381" cy="533.500" r="2.500" fill="#ef8e22" stroke="#222" stroke-width=".8"/>
    </svg>
    <div class="bar solid thirds">
      <div class="start">
        <button class="drop" aria-label="Editor type"><svg class="ic"><use href="#i-view3d"/></svg><svg class="ch"><use href="#i-chev"/></svg></button>
        <svg class="ic active-tool"><use href="#i-select"/></svg>
        <div class="modes"><button class="on" aria-label="Set"><svg class="ic"><use href="#i-set"/></svg></button><button aria-label="Extend"><svg class="ic"><use href="#i-extend"/></svg></button><button aria-label="Subtract"><svg class="ic"><use href="#i-subtract"/></svg></button><button aria-label="Invert"><svg class="ic"><use href="#i-invert"/></svg></button><button aria-label="Intersect"><svg class="ic"><use href="#i-intersect"/></svg></button></div>
      </div>
      <div class="center-opts">
        <div class="select orient"><svg class="ic"><use href="#i-axes"/></svg><select aria-label="Transform orientation"><option>Global</option></select><svg class="ch"><use href="#i-chev"/></svg></div>
        <button class="drop" aria-label="Pivot point"><svg class="ic"><use href="#i-link"/></svg><svg class="ch"><use href="#i-chev"/></svg></button>
        <div class="picker"><button class="sq dim" aria-label="Snap"><svg class="ic"><use href="#i-magnet"/></svg></button><button class="drop" aria-label="Snap to"><svg class="ic"><use href="#i-snap"/></svg><svg class="ch"><use href="#i-chev"/></svg></button></div>
        <div class="picker"><button class="sq dim" aria-label="Proportional editing"><svg class="ic"><use href="#i-prop"/></svg></button><button class="drop faint" aria-label="Falloff"><svg class="ic"><use href="#i-curve"/></svg><svg class="ch"><use href="#i-chev"/></svg></button></div>
      </div>
      <div class="end"><button class="drop options">Options<svg class="ch"><use href="#i-chev"/></svg></button></div>
    </div>
    <div class="bar over">
      <div class="select mode"><svg class="ic"><use href="#i-object"/></svg><select aria-label="Mode"><option>Object Mode</option></select><svg class="ch"><use href="#i-chev"/></svg></div>
      <nav class="chips"><button>View</button><button>Select</button><button>Add</button><button>Object</button></nav>
      <div class="view-opts">
        <button class="drop" aria-label="Object types visibility"><svg class="ic"><use href="#i-eyecur"/></svg><svg class="ch"><use href="#i-chev"/></svg></button>
        <div class="picker"><button class="sq on" aria-label="Gizmos"><svg class="ic"><use href="#i-gizmo"/></svg></button><button class="sq dark" aria-label="Gizmo options"><svg class="ch"><use href="#i-chev"/></svg></button></div>
        <div class="picker overlays"><button class="sq on" aria-label="Overlays"><svg class="ic"><use href="#i-overlay"/></svg></button><button class="sq dark" aria-label="Overlay options"><svg class="ch"><use href="#i-chev"/></svg></button></div>
        <button class="sq flat" aria-label="X-ray"><svg class="ic"><use href="#i-xray"/></svg></button>
        <div class="picker"><button class="sq" aria-label="Wireframe"><svg class="ic"><use href="#i-wire"/></svg></button><button class="sq" aria-label="Solid"><svg class="ic"><use href="#i-solid"/></svg></button><button class="sq on" aria-label="Material preview"><svg class="ic"><use href="#i-mat"/></svg></button><button class="sq" aria-label="Rendered"><svg class="ic"><use href="#i-rendered"/></svg></button><button class="sq dark" aria-label="Shading options"><svg class="ch"><use href="#i-chev"/></svg></button></div>
      </div>
    </div>
    <div class="view-body">
      <div class="tools">
        <div class="tool-group"><button class="on more" aria-label="Select box"><svg class="ic"><use href="#i-select"/></svg></button><button aria-label="Cursor"><svg class="ic"><use href="#i-cursor3d"/></svg></button></div>
        <div class="tool-group"><button aria-label="Move"><svg class="ic"><use href="#i-move"/></svg></button><button aria-label="Rotate"><svg class="ic"><use href="#i-rotate"/></svg></button><button class="more" aria-label="Scale"><svg class="ic"><use href="#i-scale"/></svg></button><button aria-label="Transform"><svg class="ic"><use href="#i-transform"/></svg></button></div>
        <div class="tool-group"><button class="more" aria-label="Annotate"><svg class="ic"><use href="#i-annotate"/></svg></button><button aria-label="Measure"><svg class="ic"><use href="#i-measure"/></svg></button></div>
      </div>
      <div class="view-info"><p>Top Orthographic</p><p>(1) Collection | Plane</p><p>10 Centimeters</p></div>
      <div class="view-nav">
        <svg class="axis-gizmo" viewBox="0 0 82 82" role="img" aria-label="View axes">
          <path stroke="#8bdc00" stroke-width="2" d="M41 9v32"/><path stroke="#ff3352" stroke-width="2" d="M41 41h32"/>
          <circle cx="9" cy="41" r="6" fill="#933642"/><circle cx="41" cy="73" r="6" fill="#5d8220"/>
          <circle cx="41" cy="9" r="8" fill="#8bdc00"/><circle cx="73" cy="41" r="8" fill="#ff3352"/><circle cx="41" cy="41" r="8" fill="#2e8bff"/>
          <text x="41" y="13">Y</text><text x="73" y="45">X</text><text x="41" y="45">Z</text>
        </svg>
        <div class="nav"><button aria-label="Zoom"><svg class="ic"><use href="#i-zoom"/></svg></button><button aria-label="Pan"><svg class="ic"><use href="#i-hand"/></svg></button><button aria-label="Camera view"><svg class="ic"><use href="#i-camera"/></svg></button><button aria-label="Perspective"><svg class="ic"><use href="#i-lattice"/></svg></button></div>
      </div>
      <button class="fold fold-r" aria-label="Show sidebar"><svg class="ch"><use href="#i-chev"/></svg></button>
    </div>
  </section>

  <div class="column col-props">
    <section class="editor outliner" aria-label="Outliner">
      <div class="bar light">
        <button class="drop" aria-label="Editor type"><svg class="ic"><use href="#i-outliner"/></svg><svg class="ch"><use href="#i-chev"/></svg></button>
        <button class="drop" aria-label="Display mode"><svg class="ic"><use href="#i-layers"/></svg><svg class="ch"><use href="#i-chev"/></svg></button>
        <div class="search"><svg class="ic"><use href="#i-search"/></svg><input type="search" aria-label="Search"></div>
        <button class="drop" aria-label="Filter"><svg class="ic"><use href="#i-filter"/></svg><svg class="ch"><use href="#i-chev"/></svg></button>
        <button class="sq boxed" aria-label="New collection"><svg class="ic"><use href="#i-newbox"/></svg></button>
      </div>
      <ul class="tree">
        <li class="root"><svg class="ic"><use href="#i-box"/></svg><span>Scene Collection</span></li>
        <li class="coll"><i class="tri down"></i><input type="checkbox" checked aria-label="Include collection"><b class="chip"><svg class="ic"><use href="#i-box"/></svg></b><span>Collection</span><svg class="ic eye"><use href="#i-eye"/></svg></li>
        <li class="obj hid"><i class="tri"></i><b class="orange"><svg class="ic"><use href="#i-camera"/></svg></b><span>Camera</span><b class="green chip"><svg class="ic"><use href="#i-cameradata"/></svg></b><svg class="ic eye"><use href="#i-eyeoff"/></svg></li>
        <li class="obj hid"><i class="tri"></i><b class="orange"><svg class="ic"><use href="#i-light"/></svg></b><span>Light</span><b class="green"><svg class="ic"><use href="#i-lightdata"/></svg></b><svg class="ic eye"><use href="#i-eyeoff"/></svg></li>
        <li class="obj picked"><i class="tri"></i><b class="orange chip"><svg class="ic"><use href="#i-mesh"/></svg></b><span>Plane</span><b class="green"><svg class="ic"><use href="#i-meshdata"/></svg></b><svg class="ic eye"><use href="#i-eye"/></svg></li>
        <li class="obj end-branch"><i class="tri"></i><b class="orange"><svg class="ic"><use href="#i-mesh"/></svg></b><span>Sphere</span><b class="green"><svg class="ic"><use href="#i-meshdata"/></svg></b><svg class="ic eye"><use href="#i-eye"/></svg></li>
      </ul>
    </section>

    <section class="editor properties" aria-label="Properties">
      <div class="bar crumbs">
        <button class="drop" aria-label="Editor type"><svg class="ic"><use href="#i-props"/></svg><svg class="ch"><use href="#i-chev"/></svg></button>
        <span class="crumb"><svg class="ic"><use href="#i-object"/></svg>Plane</span>
        <span class="crumb"><svg class="ic"><use href="#i-mat"/></svg>Material</span>
        <svg class="ic grey"><use href="#i-pin-off"/></svg>
      </div>
      <div class="prop-split">
        <nav class="prop-tabs" aria-label="Property tabs">
          <div><button aria-label="Tool"><svg class="ic"><use href="#i-tool"/></svg></button></div>
          <div><button aria-label="Render"><svg class="ic"><use href="#i-render"/></svg></button><button aria-label="Output"><svg class="ic"><use href="#i-output"/></svg></button><button aria-label="View Layer"><svg class="ic"><use href="#i-layers"/></svg></button><button aria-label="Scene"><svg class="ic"><use href="#i-scene"/></svg></button><button class="c-red" aria-label="World"><svg class="ic"><use href="#i-world"/></svg></button></div>
          <div><button class="c-orange" aria-label="Object"><svg class="ic"><use href="#i-object"/></svg></button><button class="c-blue" aria-label="Modifiers"><svg class="ic"><use href="#i-wrench"/></svg></button><button class="c-blue" aria-label="Particles"><svg class="ic"><use href="#i-particles"/></svg></button><button class="c-blue" aria-label="Physics"><svg class="ic"><use href="#i-physics"/></svg></button><button class="c-blue" aria-label="Constraints"><svg class="ic"><use href="#i-constraint"/></svg></button><button class="c-green" aria-label="Object Data"><svg class="ic"><use href="#i-meshdata"/></svg></button><button class="c-pink on" aria-label="Material"><svg class="ic"><use href="#i-mat"/></svg></button></div>
          <div><button class="c-red" aria-label="Texture"><svg class="ic"><use href="#i-texture"/></svg></button></div>
        </nav>
        <div class="prop-body">
          <div class="slots">
            <div class="slot-list"><div class="slot-item"><svg class="ic"><use href="#i-ball"/></svg>Material</div><div class="slot-foot"><i class="tri"></i><i class="grip"></i></div></div>
            <div class="slot-ops"><div><button aria-label="Add slot"><svg class="ic"><use href="#i-plus"/></svg></button><button aria-label="Remove slot"><svg class="ic"><use href="#i-minus"/></svg></button></div><button class="dark" aria-label="Slot specials"><svg class="ch"><use href="#i-chev"/></svg></button></div>
          </div>
          <div class="mat-row">
            <div class="picker"><button class="drop" aria-label="Browse material"><svg class="ic"><use href="#i-mat"/></svg><svg class="ch"><use href="#i-chev"/></svg></button><input type="text" value="Material" aria-label="Material name"><button class="sq dim" aria-label="Fake user"><svg class="ic"><use href="#i-shield"/></svg></button><button class="sq" aria-label="New material"><svg class="ic"><use href="#i-copy"/></svg></button><button class="sq" aria-label="Unlink"><svg class="ic"><use href="#i-x"/></svg></button></div>
            <button class="drop" aria-label="Link to"><svg class="ic"><use href="#i-meshdata"/></svg><svg class="ch"><use href="#i-chev"/></svg></button>
          </div>
          <h2><i class="tri"></i>Preview<i class="grip"></i></h2>
          <h2><i class="tri down"></i>Surface<i class="grip"></i></h2>
          <div class="panel">
            <button class="use-nodes"><svg class="ic"><use href="#i-nodes"/></svg><span>Use Nodes</span></button>
            <div class="prow spaced"><span class="name">Surface</span><button class="shader-pick"><i class="dot green"></i>Principled BSDF</button></div>
            <div class="prow"><span class="name"></span><div class="select"><select aria-label="Distribution"><option>GGX</option></select><svg class="ch"><use href="#i-chev"/></svg></div><i class="key"></i></div>
            <div class="prow"><span class="name"></span><div class="select"><select aria-label="Subsurface method"><option>Christensen-Burley</option></select><svg class="ch"><use href="#i-chev"/></svg></div><i class="key"></i></div>
            <div class="prow"><span class="name">Base Color</span><div class="field"><i class="dot yellow"></i><button class="color pinkish" aria-label="Base Color"></button></div><i class="key"></i></div>
            <label class="prow"><span class="name">Subsurface</span><span class="field"><i class="dot"></i><input type="text" value="0.000"></span><i class="key"></i></label>
            <div class="prow tall"><span class="name">Subsurface Radius</span><div class="field"><i class="dot blue"></i><div class="triple"><input type="text" value="1.000" aria-label="Radius X"><input type="text" value="0.200" aria-label="Radius Y"><input type="text" value="0.100" aria-label="Radius Z"></div></div><div class="keys"><i class="key"></i><i class="key"></i><i class="key"></i></div></div>
            <div class="prow"><span class="name">Subsurface Color</span><div class="field"><i class="dot yellow"></i><button class="color" aria-label="Subsurface Color"></button></div><i class="key"></i></div>
            <label class="prow"><span class="name">Metallic</span><span class="field"><i class="dot"></i><input type="text" value="0.000"></span><i class="key"></i></label>
            <label class="prow"><span class="name">Specular</span><span class="field"><i class="dot"></i><input type="text" value="0.500" style="--fill:50%"></span><i class="key"></i></label>
            <label class="prow"><span class="name">Specular Tint</span><span class="field"><i class="dot"></i><input type="text" value="0.000"></span><i class="key"></i></label>
            <label class="prow"><span class="name">Roughness</span><span class="field"><i class="dot"></i><input type="text" value="0.500" style="--fill:50%"></span><i class="key"></i></label>
            <label class="prow"><span class="name">Anisotropic</span><span class="field"><i class="dot"></i><input type="text" value="0.000"></span><i class="key"></i></label>
            <label class="prow"><span class="name">Anisotropic Rotati...</span><span class="field"><i class="dot"></i><input type="text" value="0.000"></span><i class="key"></i></label>
            <label class="prow"><span class="name">Sheen</span><span class="field"><i class="dot"></i><input type="text" value="0.000"></span><i class="key"></i></label>
            <label class="prow"><span class="name">Sheen Tint</span><span class="field"><i class="dot"></i><input type="text" value="0.500" style="--fill:50%"></span><i class="key"></i></label>
            <label class="prow"><span class="name">Clearcoat</span><span class="field"><i class="dot"></i><input type="text" value="0.000"></span><i class="key"></i></label>
            <label class="prow"><span class="name">Clearcoat Roughn...</span><span class="field"><i class="dot"></i><input type="text" value="0.030" style="--fill:2%"></span><i class="key"></i></label>
            <label class="prow"><span class="name">IOR</span><span class="field"><i class="dot"></i><input type="text" value="1.450"></span><i class="key"></i></label>
            <label class="prow"><span class="name">Transmission</span><span class="field"><i class="dot"></i><input type="text" value="0.000"></span><i class="key"></i></label>
            <label class="prow"><span class="name">Transmission Roug...</span><span class="field"><i class="dot"></i><input type="text" value="0.000"></span><i class="key"></i></label>
            <div class="prow"><span class="name">Emission</span><div class="field"><i class="dot yellow"></i><button class="color black" aria-label="Emission"></button></div><i class="key"></i></div>
          </div>
        </div>
      </div>
    </section>
  </div>
</main>

<footer class="status">
  <span class="hint"><svg class="ic"><use href="#i-mouse-l"/></svg>Select</span>
  <span class="hint drag"><svg class="ic"><use href="#i-mouse-drag"/></svg>Box Select</span>
  <span class="hint far"><svg class="ic"><use href="#i-mouse-m"/></svg>Pan View</span>
  <span class="hint far"><svg class="ic"><use href="#i-mouse-r"/></svg>Context Menu</span>
  <span class="version">2.90.0</span>
</footer>
</body>
</html>
```
FILE: styles.css
```css
* { box-sizing: border-box; }

:root {
  --blue: #5680c2;
  --line: #444;
  --dark: #2a2a2a;
  --btn: #545454;
  --input: #1d1d1d;
  --text: #dcdcdc;
}

body {
  margin: 0;
  height: 100vh;
  display: flex;
  flex-direction: column;
  overflow: hidden;
  background: #1f1f1f;
  color: var(--text);
  font: 11px/14px "DejaVu Sans Condensed", "DejaVu Sans", sans-serif;
  text-shadow: 0 1px 1px rgba(0, 0, 0, .5);
}

button, input, select {
  margin: 0;
  padding: 0;
  border: 0;
  border-radius: 0;
  background: none;
  color: inherit;
  font: inherit;
  text-shadow: inherit;
  appearance: none;
  min-width: 0;
}

i, b { font-style: normal; font-weight: normal; }
p, h2, h3, ul { margin: 0; padding: 0; font-size: inherit; font-weight: normal; }
ul { list-style: none; }
.defs { display: none; }
.ic { width: 15px; height: 15px; flex: none; display: block; }
.ch { width: 9px; height: 9px; flex: none; display: block; }

/* Top bar */
.topbar { flex: none; height: 23px; display: flex; align-items: flex-start; background: #232323; padding: 0 5px 0 8px; }
.menus { display: flex; align-items: center; gap: 16px; height: 19px; white-space: nowrap; }
.topbar .menus { margin-right: 24px; }
.menus .logo { width: 17px; height: 17px; margin-right: -6px; }
.tabs { display: flex; gap: 2px; padding-top: 2px; white-space: nowrap; }
.tabs button { height: 19px; padding: 1px 9px 0; background: #2b2b2b; color: #999; border-radius: 3px 3px 0 0; }
.tabs .on { background: #424242; color: #fff; }
.tabs .add { padding: 0; width: 18px; display: grid; place-items: center; }
.tabs .add .ic { width: 13px; height: 13px; }
.topright { margin-left: auto; display: flex; gap: 6px; }
.topright .picker { width: 191px; }

/* Shared controls */
.bar { flex: none; height: 25px; display: flex; align-items: center; padding: 1px 8px 0; position: relative; white-space: nowrap; }
.drop { height: 19px; width: 31px; flex: none; display: flex; align-items: center; justify-content: center; gap: 2px; background: var(--dark); border: 1px solid var(--line); border-radius: 3px; }
.picker { display: flex; height: 19px; border-radius: 3px; overflow: hidden; gap: 1px; background: var(--line); }
.picker .drop { border-radius: 3px 0 0 3px; }
.picker input { flex: 1; width: 120px; background: var(--input); padding: 0 7px; border: solid var(--line); border-width: 1px 0; }
.sq { width: 19px; height: 19px; flex: none; display: grid; place-items: center; background: var(--btn); color: #e6e6e6; }
.sq.dim { color: #999; }
.sq.off { background: #2b2b2b; color: #777; }
.sq.on { background: var(--blue); color: #fff; }
.sq.dark { background: var(--dark); }
.sq.flat { background: #424242; color: #888; border-radius: 3px; }
.faint { color: #777; }
.bright { color: #fff; }
.grey { color: #999; }
.modes { display: flex; gap: 1px; border-radius: 3px; overflow: hidden; }
.modes button { width: 18px; height: 18px; display: grid; place-items: center; background: var(--btn); color: #c8c8c8; }
.modes .on { background: var(--blue); color: #fff; }
.active-tool { width: 24px; height: 24px; margin: 0 14px 0 11px; }
.select { display: flex; align-items: center; height: 19px; background: var(--dark); border: 1px solid var(--line); border-radius: 3px; padding: 0 4px; gap: 6px; }
.select select { flex: 1; width: 100%; height: 100%; outline: none; }
.thirds { display: grid; grid-template-columns: 1fr auto 1fr; }
.start, .end { display: flex; align-items: center; }
.end { justify-content: flex-end; }
.tri { width: 0; height: 0; flex: none; border: solid transparent; border-width: 3px 0 3px 6px; border-left-color: #aaa; }
.tri.down { border-width: 7px 3px 0; border-left-color: transparent; border-top-color: #aaa; }
.grip { width: 11px; height: 5px; background: radial-gradient(circle, #bbb 1px, transparent 1px) 0 0 / 3px 3px; }

/* Workspace split */
.workspace { flex: 1; min-height: 0; display: grid; grid-template-columns: 799fr 782fr 328px; grid-template-rows: minmax(0, 1fr); gap: 3px; }
.column { display: grid; gap: 3px; min-width: 0; }
.col-editors { grid-template-rows: minmax(0, 426fr) minmax(0, 540fr); }
.col-props { grid-template-rows: 170px minmax(0, 1fr); }
.editor { position: relative; display: flex; flex-direction: column; overflow: hidden; min-width: 0; border-radius: 5px; background: #383838; }

/* UV editor */
.menus.plain { padding-left: 6px; }
.center-pick { display: flex; align-items: center; gap: 9px; padding-right: 24px; }
.uv .thirds { height: 26px; padding-top: 2px; }
.uv-body { flex: 1; min-height: 0; display: grid; grid-template-columns: 1fr auto 1fr; grid-template-rows: minmax(0, 1fr); background: #434343; position: relative; }
.uv-image { width: 406px; height: 100%; margin-right: 49px; display: block; }
.uv-body .nav { justify-self: end; padding: 9px 9px 0 0; }
.tools { display: flex; flex-direction: column; gap: 6px; padding: 9px 8px; }
.tool-group { width: 40px; display: flex; flex-direction: column; gap: 1px; border-radius: 4px; overflow: hidden; background: #3a3a3a; }
.tool-group button { height: 34px; display: grid; place-items: center; background: #2f2f2f; color: #e6e6e6; position: relative; padding-right: 2px; }
.tool-group .on { background: var(--blue); }
.tool-group .ic { width: 24px; height: 24px; }
.tool-group .wide { width: 28px; }
.more::after { content: ""; position: absolute; right: 2px; bottom: 2px; border: solid transparent; border-width: 0 0 4px 4px; border-bottom-color: #888; }
.nav { display: flex; flex-direction: column; gap: 2px; }
.nav button { width: 28px; height: 28px; border-radius: 50%; display: grid; place-items: center; background: #323232; color: #e6e6e6; }
.nav .ic { width: 17px; height: 17px; }
.fold { position: absolute; width: 8px; height: 16px; background: #333; color: #aaa; display: grid; place-items: center; }
.fold-r { right: 0; top: 13px; border-radius: 4px 0 0 4px; }
.fold-l { left: 0; top: 13px; border-radius: 0 4px 4px 0; }
.fold-r .ch { transform: rotate(90deg); }
.fold-l .ch { transform: rotate(-90deg); }

/* Shader editor */
.node-bar { overflow: hidden; }
.node-bar > * { flex: none; }
.type { width: 88px; margin-left: 6px; }
.node-bar .check { display: flex; align-items: center; gap: 3px; margin-left: 13px; color: #fff; }
.check input { width: 12px; height: 12px; border-radius: 2px; background: var(--blue); display: grid; place-items: center; }
.check input::after { content: ""; width: 7px; height: 4px; border: solid #fff; border-width: 0 0 2px 2px; transform: rotate(-48deg); }
.node-bar .plain { margin-left: 7px; }
.slot { width: 80px; margin: 0 6px 0 33px; padding-left: 6px; }
.node-bar .picker input { width: 117px; flex: none; }
.pin { margin: 0 20px 0 9px; }
.snap { margin-left: 6px; }
.node-canvas { flex: 1; position: relative; overflow: hidden; background: #232323; }
.node-links { position: absolute; inset: 0; width: 100%; height: 100%; }
.node { position: absolute; width: 147px; display: flex; flex-direction: column; padding: 0 7px 3px; background: #404040; border-radius: 3px; box-shadow: 0 1px 5px #000; font-size: 7px; line-height: 11px; }
.node h3 { height: 12px; margin: 0 -7px 3px; padding-left: 6px; line-height: 13px; border-radius: 3px 3px 0 0; }
.node h3::before { content: ""; display: inline-block; margin-right: 4px; border: solid transparent; border-width: 4px 2px 0; border-top-color: #ddd; }
.n-image { left: 66px; top: 68px; }
.n-image h3 { background: #a3602f; }
.n-bump { left: 263px; top: 12px; width: 86px; }
.n-bump h3 { background: #6e57ab; }
.n-bump .out { margin: 1px 0 5px; }
.n-bsdf { left: 439px; top: 34px; }
.n-bsdf h3 { background: #2c895c; }
.n-output { left: 661px; top: 61px; width: 86px; border: 1px solid #eee; padding: 0 6px 3px; }
.n-output h3 { background: #812932; height: 11px; margin: 0 -6px 4px; padding-left: 4px; line-height: 11px; }
.nrow { position: relative; height: 13px; display: flex; align-items: center; padding: 0 1px; }
.out { justify-content: flex-end; padding-right: 3px; }
.sock { position: absolute; left: -9px; top: 4px; width: 5px; height: 5px; border-radius: 50%; background: #a1a1a1; box-shadow: 0 0 1px #000; }
.out .sock { left: auto; right: -9px; }
.sock.yellow, .dot.yellow { background: #c7c729; }
.sock.blue, .dot.blue { background: #6363c7; }
.sock.green, .dot.green { background: #63c763; }
.mini-picker { display: flex; gap: 1px; height: 11px; margin: 7px 0 0; background: var(--line); border-radius: 2px; overflow: hidden; }
.mini-picker button { width: 17px; display: flex; align-items: center; justify-content: center; background: var(--dark); height: 11px; }
.mini-picker .sq { width: 11px; background: var(--btn); }
.mini-picker .ic { width: 10px; height: 10px; }
.mini-picker .ch { width: 6px; height: 6px; }
.mini-picker input { flex: 1; width: 20px; background: var(--input); padding: 0 3px; }
.node .select { height: 11px; margin-top: 4px; padding: 0 2px; border-radius: 2px; }
.node .select .ch { width: 6px; height: 6px; }
.split { display: flex; align-items: flex-end; }
.split label { flex: 1; padding-left: 1px; }
.split .select { width: 64px; }
.n-image .last { margin-top: 5px; }
.n-bump .tick { gap: 2px; margin-bottom: 3px; }
.tick input { width: 6px; height: 6px; background: #666; }
.val { flex: 1; min-width: 0; display: flex; align-items: center; height: 11px; padding: 0 5px; border-radius: 2px; background: #575757; white-space: nowrap; }
.val input { flex: 1; width: 20px; text-align: right; height: 11px; }
.val.inset { padding: 0 9px 0 8px; }
.val.full { background: var(--blue); }
.val.half { background: linear-gradient(90deg, var(--blue) 49%, #575757 49%); }
.val.slight { background: linear-gradient(90deg, var(--blue) 2px, #575757 2px); }
.n-bsdf > .out { margin-bottom: 2px; }
.sockets { display: flex; flex-direction: column; gap: 1px; margin-top: 5px; }
.sockets .select { flex: 1; margin: 0; }
.n-bsdf { padding: 0 6px 3px 8px; }
.n-bsdf h3 { margin: 0 -6px 3px -8px; }
.n-bsdf .nrow { padding: 0; }
.n-bsdf .out { padding-right: 4px; }
.n-bsdf .out .sock { right: -8px; }
.sockets .nrow:has(.swatch) { padding-left: 2px; justify-content: space-between; }
.swatch { width: 63px; height: 11px; border-radius: 2px; background: #e7e7e7; }
.n-output .select { margin: 0 0 3px; }
.tree-name { position: absolute; left: 30px; bottom: 25px; color: #fff; }
.swatch.pinkish, .color.pinkish { background: #e8e2e6; }

/* 3D viewport */
.view3d > * { position: relative; }
.view3d .scene { position: absolute; inset: 0; width: 100%; height: 100%; }
.solid { background: #383838; }
.center-opts { display: flex; gap: 6px; padding-right: 22px; }
.orient { width: 79px; }
.options { width: 63px; gap: 6px; }
.over { height: 26px; padding: 1px 8px 0 9px; background: rgba(60, 60, 60, .4); }
.mode { width: 109px; }
.chips { display: flex; gap: 3px; margin-left: 6px; }
.chips button { height: 19px; padding: 0 6px 0 7px; border-radius: 3px; background: #303030; }
.view-opts { margin-left: auto; display: flex; gap: 7px; }
.view-opts .sq { width: 18px; }
.view-opts .sq.flat { background: #3c3c3c; }
.view-body { flex: 1; min-height: 0; display: flex; }
.view-info { padding: 8px 0 0 10px; line-height: 18px; color: #fff; text-shadow: 0 1px 2px #000; }
.view-nav { margin-left: auto; display: flex; flex-direction: column; align-items: flex-end; padding: 9px 9px 0 0; gap: 0; }
.axis-gizmo { width: 82px; height: 82px; }
.axis-gizmo text { font-size: 11px; text-anchor: middle; fill: #222; text-shadow: none; }

/* Outliner */
.light { background: #424242; gap: 7px; padding: 0 5px 0 9px; }
.search { display: flex; align-items: center; width: 110px; height: 19px; margin: 0 auto 0 15px; padding: 0 4px; background: var(--input); border-radius: 3px; }
.search input { flex: 1; outline: none; }
.boxed { border: 1px solid #555; background: #464646; border-radius: 3px; }
.outliner { background: #2a2a2a; }
.tree { padding-top: 1px; }
.tree li { height: 20px; display: flex; align-items: center; padding-right: 6px; position: relative; }
.tree li:nth-child(even) { background: #2e2e2e; }
.tree span { line-height: 20px; padding-top: 2px; }
.tree .root { padding-left: 22px; gap: 7px; }
.tree .coll { padding-left: 27px; gap: 5px; }
.coll .tri { margin-right: 6px; }
.tree input { width: 11px; height: 11px; border-radius: 1px; background: #e0e0e0; display: grid; place-items: center; }
.tree input::after { content: ""; width: 7px; height: 3px; border: solid #222; border-width: 0 0 2px 2px; transform: rotate(-48deg); }
.tree b { width: 18px; height: 18px; display: grid; place-items: center; border-radius: 3px; position: relative; }
.tree .chip { background: #585858; }
.tree .coll .chip { background: #444; box-shadow: inset 0 0 0 1px #666; }
.tree .eye { margin-left: auto; color: #e0e0e0; }
.tree .obj { padding-left: 47px; }
.tree .obj span { padding: 2px 20px 0 5px; }
.obj .tri { margin-right: 8px; }
.obj::before { content: ""; position: absolute; left: 49px; top: 0; width: 1px; height: 100%; background: #777; }
.obj::after { content: ""; position: absolute; left: 53px; top: 9px; width: 14px; height: 1px; background: #888; }
.end-branch::before { height: 10px; }
.orange { color: #d98b4f; }
.green { color: #1bb489; }
.tree .hid span { color: #808080; }
.hid .orange { color: #85593b; }
.hid .green { color: #237d63; }
.tree .hid .eye { color: #999; }
.tree li.picked { background: #444; }
.tree .picked .orange.chip { background: #656565; }

/* Properties */
.crumbs { gap: 14px; padding: 0 6px 0 8px; }
.crumb { display: flex; align-items: center; gap: 9px; }
.crumb + .crumb { margin-left: 17px; }
.crumbs > .grey { margin-left: auto; }
.prop-split { flex: 1; min-height: 0; display: flex; }
.prop-tabs { flex: none; width: 28px; padding: 8px 0 0 2px; display: flex; flex-direction: column; gap: 10px; background: #232323; }
.prop-tabs div { display: flex; flex-direction: column; gap: 2px; }
.prop-tabs button { height: 26px; display: grid; place-items: center; background: #2c2c2c; border-radius: 4px 0 0 4px; color: #d0d0d0; }
.prop-tabs .on { background: #444; }
.prop-tabs .c-red { color: #c05a66; }
.prop-tabs .c-pink { color: #f27484; }
.prop-tabs .c-orange { color: #d98b4f; }
.prop-tabs .c-blue { color: #6d97d9; }
.prop-tabs .c-green { color: #1bb489; }
.prop-body { flex: 1; min-width: 0; background: #424242; overflow: hidden; display: flex; flex-direction: column; }
.prop-body > * { flex: none; }
.slots { display: flex; gap: 10px; padding: 9px 5px 0 9px; }
.slot-list { flex: 1; height: 78px; padding: 5px; display: flex; flex-direction: column; justify-content: space-between; background: #353535; border-radius: 3px; }
.slot-item { height: 18px; display: flex; align-items: center; gap: 9px; padding-left: 1px; background: #696d76; border-radius: 3px; color: #fff; }
.slot-foot { display: flex; align-items: center; padding: 0 110px 2px 6px; justify-content: space-between; }
.slot-ops { width: 18px; display: flex; flex-direction: column; gap: 8px; }
.slot-ops div { display: flex; flex-direction: column; gap: 1px; border-radius: 3px; overflow: hidden; }
.slot-ops button { width: 18px; height: 18px; display: grid; place-items: center; background: var(--btn); }
.slot-ops .dark { background: var(--dark); border-radius: 3px; }
.mat-row { display: flex; gap: 10px; padding: 7px 5px 9px 9px; }
.mat-row .picker { flex: 1; }
.prop-body h2 { height: 24px; display: flex; align-items: center; gap: 8px; padding: 0 4px 0 9px; font-size: 12px; }
h2 .grip { margin-left: auto; }
.panel { background: #383838; padding: 9px 5px 0 9px; display: flex; flex-direction: column; gap: 5px; }
.use-nodes { height: 18px; display: flex; align-items: center; padding: 0 3px; background: #5277b5; border-radius: 3px; color: #fff; }
.use-nodes span { flex: 1; text-align: center; }
.prow { height: 20px; flex: none; display: grid; grid-template-columns: 97px 161px auto; column-gap: 9px; align-items: center; }
.spaced { margin: 11px 0; }
.name { text-align: right; white-space: nowrap; display: flex; justify-content: flex-end; }
.prow .select { height: 20px; padding-left: 6px; }
.shader-pick { height: 20px; display: flex; align-items: center; gap: 8px; padding-left: 5px; background: var(--dark); border: 1px solid var(--line); border-radius: 3px; }
.dot { width: 7px; height: 7px; border-radius: 50%; background: #a1a1a1; }
.field { display: flex; height: 20px; }
.field .dot { width: 20px; height: 20px; flex: none; border-radius: 3px 0 0 3px; background: radial-gradient(circle, #a1a1a1 3px, var(--dark) 4px); box-shadow: inset 0 0 0 1px var(--line); }
.field .dot.yellow { background: radial-gradient(circle, #c7c729 3px, var(--dark) 4px); }
.field .dot.blue { background: radial-gradient(circle, #6363c7 3px, var(--dark) 4px); border-radius: 3px; }
.field > input, .color { flex: 1; height: 20px; width: 60px; text-align: center; border: 1px solid #484848; border-left: 0; border-radius: 0 3px 3px 0; background: linear-gradient(90deg, var(--blue) var(--fill, 0%), #585858 var(--fill, 0%)); }
.color { background: #e7e7e7; border-width: 1px 0; }
.swatch.black, .color.black { background: #000; }
.field input { font-family: "DejaVu Sans", sans-serif; font-size: 11px; }
.tall { height: 60px; align-items: start; }
.tall .name { line-height: 20px; }
.triple { flex: 1; margin-left: 6px; display: flex; flex-direction: column; border-radius: 3px; overflow: hidden; gap: 1px; height: 59px; }
.triple input { width: 100%; flex: 1; text-align: center; background: #585858; }
.key { width: 4px; height: 4px; border-radius: 50%; background: #ccc; }
.keys { display: flex; flex-direction: column; gap: 16px; padding-top: 8px; }

/* Status bar */
.status { flex: none; height: 19px; display: flex; align-items: center; padding: 2px 12px 0 8px; background: #303030; color: #a0a0a0; white-space: nowrap; }
.hint { display: flex; align-items: center; gap: 9px; }
.hint .ic { width: 16px; height: 17px; }
.hint.drag { margin-left: 8px; width: 172px; gap: 7px; }
.drag .ic { width: 20px; }
.hint.far { width: 237px; }
.version { margin-left: auto; }
```
